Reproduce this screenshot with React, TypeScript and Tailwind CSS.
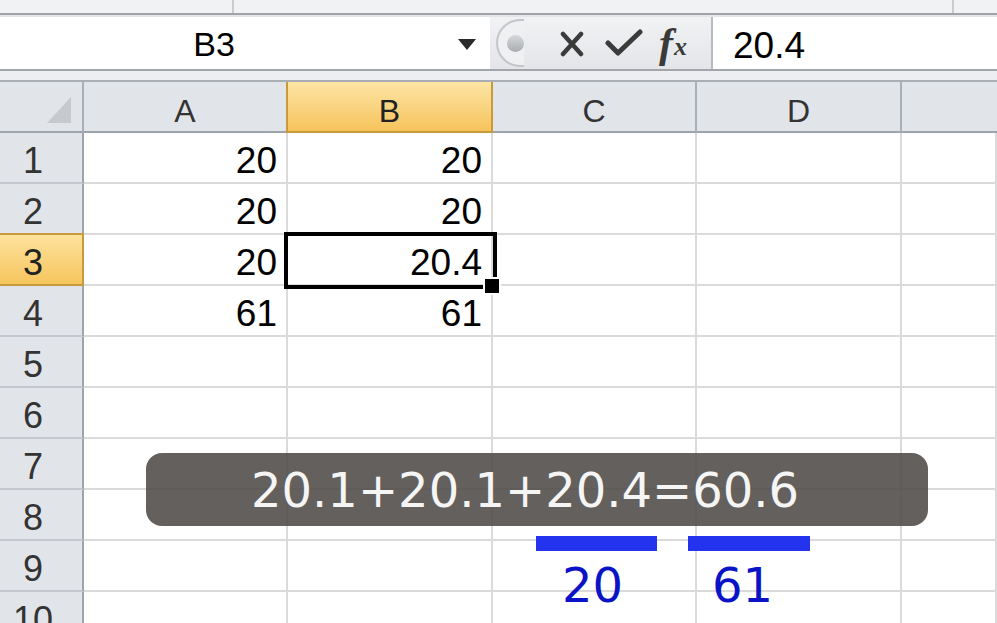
import React from "react";

const cellFont = { fontFamily: '"Liberation Sans", Arial, sans-serif' };
const verdana = { fontFamily: '"DejaVu Sans", Verdana, sans-serif' };

const data: Record<number, [string, string]> = {
  1: ["20", "20"],
  2: ["20", "20"],
  3: ["20", "20.4"],
  4: ["61", "61"],
};

function ColHeader({ label, selected }: { label: string; selected?: boolean }) {
  return (
    <div
      className={
        selected
          ? "flex items-center justify-center pt-[8px] text-[32px] leading-none text-[#222] bg-gradient-to-b from-[#fde5a4] to-[#f6c35a] border-r-2 border-b-2 border-l-2 border-[#c99a3c] -ml-[2px]"
          : "flex items-center justify-center pt-[8px] text-[32px] leading-none text-[#333] bg-[#e1e4e9] border-r-2 border-b-2 border-r-[#a9afb7] border-b-[#9ea4ab]"
      }
    >
      {label}
    </div>
  );
}

function RowHeader({ n, selected }: { n: number; selected?: boolean }) {
  return (
    <div
      className={
        selected
          ? "flex items-center justify-center pr-[16px] pt-[6px] text-[36px] leading-none text-[#222] bg-gradient-to-b from-[#fde29c] to-[#f6c55c] border-r-2 border-r-[#c99a3c] border-b-2 border-b-[#c99a3c] border-t-2 border-t-[#c99a3c] -mt-[2px]"
          : "flex items-center justify-center pr-[16px] pt-[6px] text-[36px] leading-none text-[#333] bg-[#e1e4e9] border-r-2 border-r-[#9ea4ab] border-b-2 border-b-[#c4c8ce]"
      }
    >
      {n}
    </div>
  );
}

function Cell({ value, selection }: { value?: string; selection?: boolean }) {
  return (
    <div className="relative flex items-center justify-end pr-[9px] pt-[6px] text-[37px] leading-none text-black bg-white border-r-2 border-b-2 border-[#dadada]">
      {value}
      {selection && (
        <>
          <div className="absolute z-10 left-[-4px] top-[-3px] w-[213px] h-[57px] border-4 border-black pointer-events-none" />
          <div className="absolute z-20 left-[195px] top-[42px] w-[18px] h-[18px] bg-black border-2 border-white" />
        </>
      )}
    </div>
  );
}

export default function App() {
  const rows = [1, 2, 3, 4, 5, 6, 7, 8, 9, 10];
  return (
    <div className="relative w-[997px] h-[623px] overflow-hidden bg-white" style={cellFont}>
      {/* Top ribbon remnant */}
      <div className="flex h-[13px] bg-[#f1f2f3]">
        <div className="w-[234px] border-r-2 border-[#c9cbce]" />
        <div className="w-[720px] border-r-2 border-[#c9cbce]" />
        <div className="flex-1" />
      </div>
      <div className="h-[2px] bg-[#9fa3a8]" />
      <div className="h-[2px] bg-[#e3e5e8]" />

      {/* Formula bar */}
      <div className="flex h-[52px] bg-white">
        <div className="flex w-[490px] items-center">
          <div className="w-[428px] text-center text-[34px] leading-none text-black pt-[2px]">B3</div>
          <svg width="18" height="11" viewBox="0 0 18 11" className="ml-[30px] mt-[2px]">
            <path d="M0 0 H18 L9 11 Z" fill="#2a2a2a" />
          </svg>
        </div>
        <div className="flex w-[221px] items-center bg-gradient-to-b from-[#f1f2f4] to-[#e3e5e8]">
          <div className="relative ml-[6px] flex h-[48px] w-[28px] items-center rounded-l-full border-l-2 border-t-2 border-b-2 border-[#c3c5c9] bg-[#eef0f2]">
            <div className="ml-[9px] h-[17px] w-[20px] rounded-full bg-gradient-to-b from-[#d6d8db] to-[#a9acb0]" />
          </div>
          <svg width="26" height="28" viewBox="0 0 26 28" className="ml-[35px]">
            <path d="M4 5 L22 25 M22 5 L4 25" stroke="#3b3b3b" strokeWidth="4.5" strokeLinecap="round" />
          </svg>
          <svg width="38" height="30" viewBox="0 0 38 30" className="ml-[20px]">
            <path d="M3 15 L13 25 L35 4" stroke="#3b3b3b" strokeWidth="5" fill="none" strokeLinecap="round" strokeLinejoin="round" />
          </svg>
          <div
            className="ml-[16px] flex items-end text-[#3a3a3a] italic font-bold leading-none"
            style={{ fontFamily: '"Liberation Serif", "Times New Roman", serif' }}
          >
            <span className="text-[42px]">f</span>
            <span className="text-[26px] ml-[1px] mb-[4px]">x</span>
          </div>
        </div>
        <div className="flex flex-1 items-center border-l-2 border-[#b7babe] pl-[20px] text-[37px] leading-none text-black pt-[4px]">
          20.4
        </div>
      </div>
      <div className="h-[2px] bg-[#a2a6ab]" />
      <div className="h-[9px] bg-[#eceef1]" />
      <div className="h-[2px] bg-[#a9aeb4]" />

      {/* Grid */}
      <div className="grid grid-cols-[84px_204px_205px_204px_205px_1fr] grid-rows-[51px_repeat(10,51px)]">
        <div className="relative bg-[#e1e4e9] border-r-2 border-b-2 border-r-[#a9afb7] border-b-[#9ea4ab]">
          <svg width="24" height="26" viewBox="0 0 24 26" className="absolute left-[47px] top-[15px]">
            <path d="M24 0 L24 26 L0 26 Z" fill="#c6c9ce" />
          </svg>
        </div>
        <ColHeader label="A" />
        <ColHeader label="B" selected />
        <ColHeader label="C" />
        <ColHeader label="D" />
        <div className="bg-[#e1e4e9] border-b-2 border-[#9ea4ab]" />
        {rows.map((r) => (
          <React.Fragment key={r}>
            <RowHeader n={r} selected={r === 3} />
            <Cell value={data[r]?.[0]} />
            <Cell value={data[r]?.[1]} selection={r === 3} />
            <Cell />
            <Cell />
            <Cell />
          </React.Fragment>
        ))}
      </div>

      {/* Overlay annotation */}
      <div
        className="absolute z-30 left-[146px] top-[453px] flex h-[73px] w-[782px] items-start rounded-[16px] bg-[#4f4a47]/[0.88] pl-[105px] pt-[13px]"
        style={verdana}
      >
        <span className="text-[48px] leading-none text-[#f5f5f5]">20.1+20.1+20.4=60.6</span>
      </div>
      <div className="absolute z-30 left-[536px] top-[536px] h-[15px] w-[121px] bg-[#2433ee]" />
      <div className="absolute z-30 left-[688px] top-[536px] h-[15px] w-[122px] bg-[#2433ee]" />
      <div className="absolute z-30 left-[562px] top-[561px] text-[48px] leading-none text-[#0a14c6]" style={verdana}>
        20
      </div>
      <div className="absolute z-30 left-[712px] top-[561px] text-[48px] leading-none text-[#0a14c6]" style={verdana}>
        61
      </div>
    </div>
  );
}
